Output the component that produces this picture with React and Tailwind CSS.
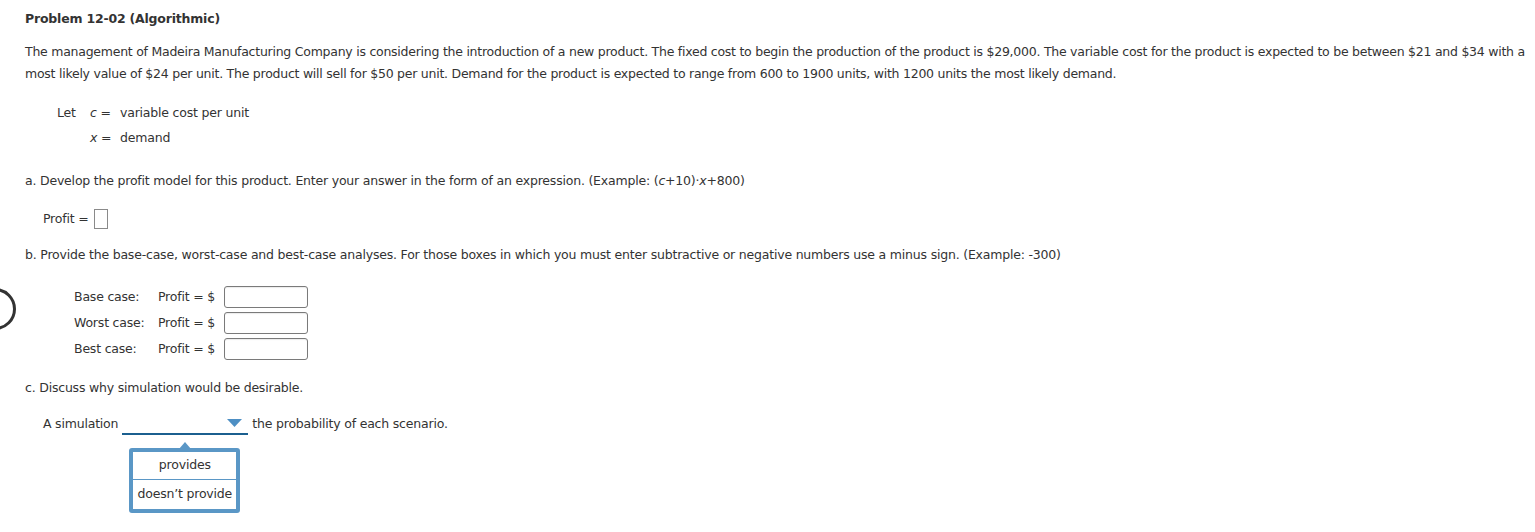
export default function App() {
  const cases = ['Base case:', 'Worst case:', 'Best case:']

  return (
    <div className="relative min-h-screen bg-white text-[12.5px] tracking-[-0.2px] text-[#333] font-['DejaVu_Sans','Liberation_Sans',sans-serif] overflow-hidden">
      {/* left edge ring */}
      <div className="absolute left-[-26px] top-[288px] w-[42px] h-[42px] rounded-full border-[3px] border-[#333]" />

      <div className="pl-[25px] pt-[10px]">
        <h1 className="font-bold leading-[18px]">Problem 12-02 (Algorithmic)</h1>

        <p className="mt-[13px] leading-[22px] whitespace-nowrap tracking-[-0.25px]">
          The management of Madeira Manufacturing Company is considering the introduction of a new product. The fixed cost to begin the production of the product is $29,000. The variable cost for the product is expected to be between $21 and $34 with a
          <br />
          most likely value of $24 per unit. The product will sell for $50 per unit. Demand for the product is expected to range from 600 to 1900 units, with 1200 units the most likely demand.
        </p>

        {/* definitions */}
        <div className="mt-[17px] ml-[32px] grid grid-cols-[33px_30px_auto] gap-y-[3px] leading-[22px] w-max">
          <span>Let</span>
          <span><i>c</i> =</span>
          <span>variable cost per unit</span>
          <span />
          <span><i>x</i> =</span>
          <span>demand</span>
        </div>

        {/* part a */}
        <p className="mt-[21px] leading-[22px]">
          a. Develop the profit model for this product. Enter your answer in the form of an expression. (Example: (<i>c</i>+10)·<i>x</i>+800)
        </p>
        <div className="mt-[17px] ml-[18px] flex items-center gap-[6px] h-[20px]">
          <span>Profit =</span>
          <div className="w-[14px] h-[20px] border border-[#8a8a8a]" />
        </div>

        {/* part b */}
        <p className="mt-[15px] leading-[22px]">
          b. Provide the base-case, worst-case and best-case analyses. For those boxes in which you must enter subtractive or negative numbers use a minus sign. (Example: -300)
        </p>
        <div className="mt-[20px] ml-[49px] flex flex-col gap-[4px]">
          {cases.map((c) => (
            <div key={c} className="flex items-center h-[22px]">
              <span className="w-[84px]">{c}</span>
              <span className="w-[66px]">Profit = $</span>
              <div className="w-[84px] h-[22px] rounded-[3px] border border-[#7a7a7a] shadow-[inset_0_1px_1px_rgba(0,0,0,0.08)]" />
            </div>
          ))}
        </div>

        {/* part c */}
        <p className="mt-[17px] leading-[22px]">c. Discuss why simulation would be desirable.</p>
        <div className="mt-[14px] ml-[18px] flex items-center h-[22px]">
          <span>A simulation</span>
          <div className="relative ml-[4px] w-[126px] h-[22px] border-b-2 border-[#1b5f8f]">
            <svg className="absolute right-[6px] top-[6px]" width="15" height="8" viewBox="0 0 15 8">
              <path d="M0 0 H15 L7.5 8 Z" fill="#4d8fc4" />
            </svg>
            {/* open menu */}
            <div className="absolute left-[7px] top-[35px] w-[111px] rounded-[3px] border-[4px] border-[#5a97c6] bg-white z-10">
              <svg className="absolute left-[46px] top-[-10px]" width="12" height="7" viewBox="0 0 12 7">
                <path d="M0 7 L6 0 L12 7 Z" fill="#5a97c6" />
              </svg>
              <div className="h-[28px] flex items-center justify-center border-b border-[#5a97c6]">provides</div>
              <div className="h-[29px] flex items-center justify-center whitespace-nowrap">doesn’t provide</div>
            </div>
          </div>
          <span className="ml-[4px]">the probability of each scenario.</span>
        </div>
      </div>
    </div>
  )
}
